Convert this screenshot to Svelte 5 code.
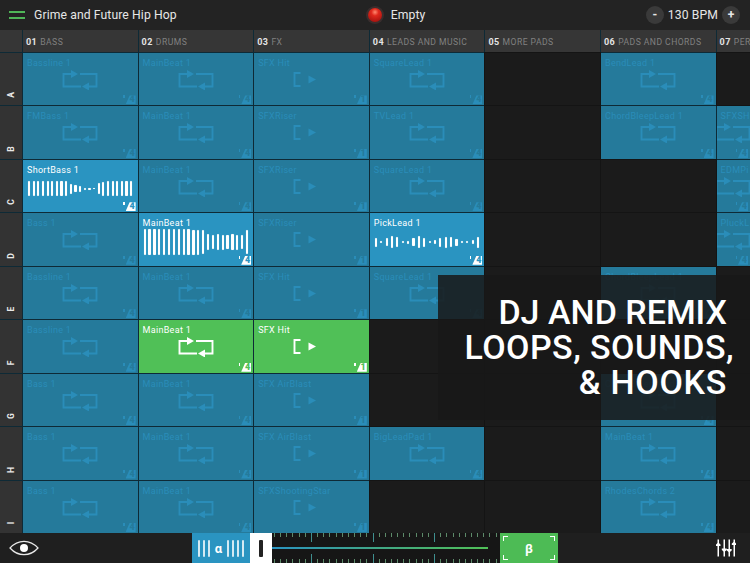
<script>
  const columns = [
    ['01', 'BASS'],
    ['02', 'DRUMS'],
    ['03', 'FX'],
    ['04', 'LEADS AND MUSIC'],
    ['05', 'MORE PADS'],
    ['06', 'PADS AND CHORDS'],
    ['07', 'PERC']
  ];

  const shortBass = [15, 15, 15, 15, 15, 15, 15, 15, 15, 10, 7, 6, 2, 2, 1, 11, 14, 15, 15, 15, 15, 15, 15];
  const mainBeat = [26, 26, 26, 26, 26, 26, 26, 26, 26, 26, 25, 25, 24, 16, 14, 16, 15, 14, 16, 15, 14, 24];
  const pickLead = [9, 2, 8, 12, 10, 2, 3, 8, 12, 9, 2, 4, 9, 11, 10, 7, 2, 2, 4, 11];

  // l = loop, s = one shot, null = empty slot
  const l = (name, extra = {}) => ({ name, type: 'loop', ...extra });
  const s = (name, extra = {}) => ({ name, type: 'shot', ...extra });

  const rows = [
    ['A', [l('Bassline 1'), l('MainBeat 1'), s('SFX Hit'), l('SquareLead 1'), null, l('BendLead 1'), null]],
    ['B', [l('FMBass 1'), l('MainBeat 1'), s('SFXRiser'), l('TVLead 1'), null, l('ChordBleepLead 1'), l('SFXSH')]],
    ['C', [l('ShortBass 1', { wave: shortBass }), l('MainBeat 1'), s('SFXRiser'), l('SquareLead 1'), null, null, l('EDMPi')]],
    ['D', [l('Bass 1'), l('MainBeat 1', { wave: mainBeat }), s('SFXRiser'), l('PickLead 1', { wave: pickLead }), null, null, l('PluckL')]],
    ['E', [l('Bassline 1'), l('MainBeat 1'), s('SFX Hit'), l('SquareLead 1'), null, l('ChordBleepLead 1'), null]],
    ['F', [l('Bassline 1'), l('MainBeat 1', { green: true }), s('SFX Hit', { green: true }), null, null, null, null]],
    ['G', [l('Bass 1'), l('MainBeat 1'), s('SFX AirBlast'), null, null, l('ChordBleepLead 1'), null]],
    ['H', [l('Bass 1'), l('MainBeat 1'), s('SFX AirBlast'), l('BigLeadPad 1'), null, l('MainBeat 1'), null]],
    ['I', [l('Bass 1'), l('MainBeat 1'), s('SFXShootingStar'), null, null, l('RhodesChords 2'), null]]
  ];

  const ticks = Array.from({ length: 37 }, (_, i) => i);
  const isMajor = (t) => t % 10 === 6 && t < 30;
</script>

<div class="app">
  <header class="topbar">
    <div class="left">
      <span class="burger"><i></i><i></i></span>
      <span class="title">Grime and Future Hip Hop</span>
    </div>
    <div class="center">
      <span class="rec"><i></i></span>
      <span class="title">Empty</span>
    </div>
    <div class="right">
      <span class="round">-</span>
      <span class="title">130 BPM</span>
      <span class="round">+</span>
    </div>
  </header>

  <main class="grid">
    <div class="head corner"></div>
    {#each columns as [num, label]}
      <div class="head"><b>{num}</b> {label}</div>
    {/each}

    {#each rows as [letter, cells]}
      <div class="letter"><span>{letter}</span></div>
      {#each cells as cell}
        {#if cell}
          <div class="cell" class:active={cell.wave} class:green={cell.green}>
            <span class="name">{cell.name}</span>
            {#if cell.wave}
              <div class="wave">
                {#each cell.wave as h}
                  <i style="height: {h}px"></i>
                {/each}
              </div>
            {:else if cell.type === 'loop'}
              <svg class="icon" width="36" height="20" viewBox="0 0 36 20" fill="none" stroke="currentColor" stroke-width="1.9">
                <path d="M10 4H1.5V16.5H19" />
                <path d="M18 4H34.5V16.5H26" />
                <path d="M9 0L16 4L9 8Z" fill="currentColor" stroke="none" />
                <path d="M27 12.5L20 16.5L27 20.5Z" fill="currentColor" stroke="none" />
              </svg>
            {:else}
              <svg class="icon" width="36" height="20" viewBox="0 0 36 20" fill="none" stroke="currentColor" stroke-width="1.9">
                <path d="M7.5 3H1.5V16H7.5" />
                <path d="M15.5 5.5L23 9.5L15.5 13.5Z" fill="currentColor" stroke="none" />
              </svg>
            {/if}
            <span class="badge"><u></u><em>{cell.type === 'loop' ? '4' : '1'}</em></span>
          </div>
        {:else}
          <div class="cell empty"></div>
        {/if}
      {/each}
    {/each}
  </main>

  <footer class="bottombar">
    <svg class="eye" width="30" height="16" viewBox="0 0 30 16" fill="none">
      <path d="M1 8C5 3.5 10 1.3 15 1.3S25 3.5 29 8C25 12.5 20 14.7 15 14.7S5 12.5 1 8Z" stroke="#e8e8e8" stroke-width="1.2" />
      <circle cx="15" cy="8" r="4" fill="#fff" />
    </svg>

    <div class="scrub">
      <div class="alpha">
        <i></i><i></i><i></i><b>α</b><i></i><i></i><i></i><i></i>
      </div>
      <div class="handle"><i></i></div>
      <div class="track">
        <div class="ruler top">
          {#each ticks as t}
            <i class:major={isMajor(t)}></i>
          {/each}
        </div>
        <div class="line"></div>
        <div class="ruler bottom">
          {#each ticks as t}
            <i class:major={isMajor(t)}></i>
          {/each}
        </div>
      </div>
      <div class="beta">
        <span class="corner-mark tl"></span>
        <span class="corner-mark tr"></span>
        <span class="corner-mark bl"></span>
        <span class="corner-mark br"></span>
        β
      </div>
    </div>

    <svg class="mixer" width="20" height="18" viewBox="0 0 20 18" fill="#fff" stroke="none">
      <path d="M1.5 0.5H3V17.5H1.5ZM7.5 0.5H9V17.5H7.5ZM12.5 0.5H14V17.5H12.5ZM17.5 0.5H19V17.5H17.5Z" />
      <path d="M0 5.5L2.25 3.5L4.5 5.5V7H0ZM5.8 9.5H10.7V11L8.25 13L5.8 11ZM10.8 10H15.7V11.5L13.25 13.5L10.8 11.5ZM15.8 4.5L18.25 2.5L20 4.5V6H15.8Z" />
    </svg>
  </footer>

  <div class="promo">
    <span class="one">DJ AND REMIX</span>
    <span class="two">LOOPS, SOUNDS,</span>
    <span class="three">&amp; HOOKS</span>
  </div>
</div>

<style>
  :global(body) {
    margin: 0;
    background: #1c1c1c;
  }

  .app {
    position: relative;
    width: 750px;
    height: 563px;
    overflow: hidden;
    display: flex;
    flex-direction: column;
    font-family: Roboto, 'Liberation Sans', sans-serif;
    background: #1f1f1f;
  }

  .topbar {
    height: 30px;
    flex: none;
    display: grid;
    grid-template-columns: 1fr auto 1fr;
    align-items: center;
    background: #232323;
    color: #e6e6e6;
  }

  .title {
    font-size: 12.2px;
    letter-spacing: 0.1px;
  }

  .left {
    display: flex;
    align-items: center;
    gap: 9px;
    padding-left: 9px;
  }

  .burger {
    display: flex;
    flex-direction: column;
    gap: 4px;
    width: 16px;
  }

  .burger i {
    height: 2px;
    background: #4fb658;
  }

  .center {
    display: flex;
    align-items: center;
    gap: 7px;
    padding-left: 41px;
  }

  .rec {
    width: 18px;
    height: 18px;
    border-radius: 50%;
    background: #3a2e2e;
    display: flex;
    align-items: center;
    justify-content: center;
  }

  .rec i {
    width: 14px;
    height: 14px;
    border-radius: 50%;
    background: radial-gradient(circle at 50% 30%, #ff8a70 0, #e0281c 30%, #a81410 80%);
  }

  .right {
    display: flex;
    align-items: center;
    justify-content: flex-end;
    gap: 4px;
    padding-right: 10px;
  }

  .round {
    width: 18px;
    height: 18px;
    border-radius: 50%;
    background: #3a3a3a;
    font-size: 12px;
    font-weight: 700;
    line-height: 18px;
    text-align: center;
  }

  .grid {
    flex: none;
    height: 503px;
    display: grid;
    grid-template-columns: 22px repeat(6, 114.6px) 1fr;
    grid-template-rows: 22px repeat(9, 1fr);
    gap: 1px;
    background: #0e2a36;
  }

  .head {
    background: #363636;
    color: #808080;
    font-size: 8.6px;
    letter-spacing: 0.45px;
    display: flex;
    align-items: center;
    gap: 3px;
    padding: 1px 0 0 3px;
    white-space: nowrap;
    overflow: hidden;
  }

  .head b {
    color: #e4e4e4;
    font-weight: 700;
    font-size: 9px;
  }

  .letter {
    background: #333;
    color: #e8e8e8;
    font-size: 8.5px;
    font-weight: 700;
    display: flex;
    align-items: flex-end;
    justify-content: center;
    padding-bottom: 5px;
  }

  .letter span {
    transform: rotate(-90deg);
  }

  .cell {
    --bg: #257a9b;
    --fg: #2a8db9;
    position: relative;
    background: var(--bg);
    color: var(--fg);
    overflow: hidden;
    min-width: 0;
    min-height: 0;
  }

  .cell.empty {
    --bg: #1b1b1b;
    box-shadow: 0 0 0 1px #141414;
  }

  .cell.active {
    --bg: #2a94c1;
    --fg: #fff;
  }

  .cell.green {
    --bg: #50c057;
    --fg: #fff;
  }

  .name {
    position: absolute;
    top: 5px;
    left: 4px;
    font-size: 9px;
    letter-spacing: 0.3px;
    white-space: nowrap;
  }

  .icon {
    position: absolute;
    left: 50%;
    top: 17px;
    margin-left: -18px;
  }

  .wave {
    position: absolute;
    left: 5px;
    right: 5px;
    top: 15px;
    bottom: 10px;
    display: flex;
    align-items: center;
    justify-content: space-between;
  }

  .wave i {
    width: 2.2px;
    border-radius: 1px;
    background: #fff;
    box-shadow: 0 0 1px rgba(255, 255, 255, 0.4);
  }

  .badge {
    position: absolute;
    right: 2px;
    bottom: 1px;
    display: flex;
    align-items: flex-start;
    gap: 1px;
  }

  .badge u {
    width: 1.5px;
    height: 3px;
    background: var(--fg);
  }

  .badge em {
    width: 10px;
    height: 9px;
    background: var(--fg);
    color: var(--bg);
    clip-path: polygon(4px 0, 100% 0, 100% 100%, 0 100%);
    font-style: normal;
    font-size: 9px;
    font-weight: 900;
    line-height: 9px;
    text-align: right;
    padding-right: 1px;
    box-sizing: border-box;
  }

  .bottombar {
    flex: 1;
    position: relative;
    display: flex;
    align-items: center;
    justify-content: space-between;
    padding: 0 14px 0 9px;
    background: #1f1f1f;
  }

  .scrub {
    position: absolute;
    left: 192px;
    top: 0;
    width: 366px;
    height: 30px;
    display: flex;
  }

  .alpha {
    width: 58px;
    background: #2a94c1;
    color: #fff;
    display: flex;
    align-items: center;
    justify-content: center;
    gap: 3px;
  }

  .alpha b {
    font-size: 13px;
    line-height: 1;
    margin: 0 2px;
  }

  .alpha i {
    width: 2px;
    height: 17px;
    border-radius: 1px;
    background: #fff;
    opacity: 0.8;
  }

  .handle {
    width: 22px;
    background: #fff;
    display: flex;
    align-items: center;
    justify-content: center;
  }

  .handle i {
    width: 4px;
    height: 17px;
    border-radius: 1px;
    background: #222;
  }

  .track {
    width: 228px;
    background: #161616;
    display: flex;
    flex-direction: column;
    justify-content: space-between;
  }

  .ruler {
    height: 9px;
    display: flex;
    justify-content: space-between;
    padding: 0 3px 0 2px;
  }

  .ruler.bottom {
    align-items: flex-end;
  }

  .ruler i {
    width: 1px;
    height: 4px;
    background: #5d8a6a;
  }

  .ruler i.major {
    height: 9px;
    background: #3f8f8f;
  }

  .line {
    height: 2px;
    margin-right: 12px;
    background: linear-gradient(90deg, #2a94c1, #3fa58a 45%, #50c057);
  }

  .beta {
    position: relative;
    margin-left: auto;
    width: 58px;
    background: #4dbb55;
    color: #fff;
    font-size: 13px;
    font-weight: 700;
    display: flex;
    align-items: center;
    justify-content: center;
  }

  .corner-mark {
    position: absolute;
    width: 4px;
    height: 4px;
    border: 0 solid #fff;
  }

  .tl { left: 3px; top: 3px; border-width: 1px 0 0 1px; }
  .tr { right: 3px; top: 3px; border-width: 1px 1px 0 0; }
  .bl { left: 3px; bottom: 3px; border-width: 0 0 1px 1px; }
  .br { right: 3px; bottom: 3px; border-width: 0 1px 1px 0; }

  .promo {
    position: absolute;
    left: 438px;
    top: 275px;
    width: 312px;
    height: 145px;
    box-sizing: border-box;
    padding: 20px 23px 0 0;
    background: rgba(24, 24, 24, 0.86);
    color: #fff;
    font-size: 34px;
    font-weight: 500;
    line-height: 35px;
    text-align: right;
  }

  .promo span {
    display: block;
    white-space: nowrap;
  }

  .promo .two {
    margin-right: -7px;
    letter-spacing: 0.45px;
  }

  .promo .three {
    letter-spacing: 0.7px;
  }
</style>
